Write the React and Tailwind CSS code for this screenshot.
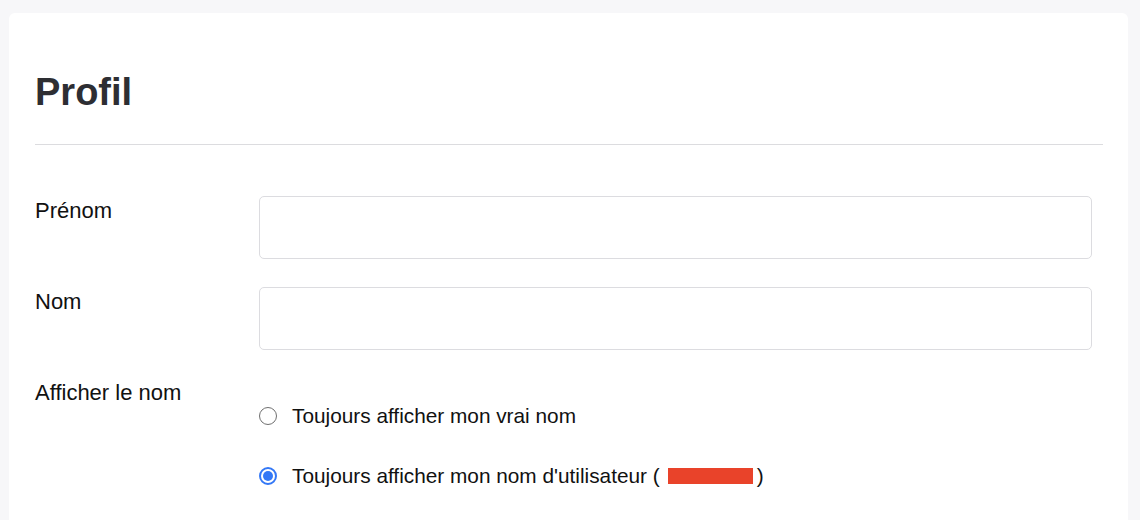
const Radio = ({ checked }) => (
  <span
    className={
      checked
        ? "w-[18px] h-[18px] rounded-full border-2 border-[#3478f6] bg-white flex items-center justify-center flex-shrink-0"
        : "w-[18px] h-[18px] rounded-full border-[1.5px] border-[#6f6f6f] bg-white flex-shrink-0"
    }
  >
    {checked && <span className="w-[10px] h-[10px] rounded-full bg-[#3478f6]" />}
  </span>
)

const Field = ({ label }) => (
  <div className="flex">
    <label className="w-[224px] flex-shrink-0 text-[22px] leading-[30px] text-[#111]">{label}</label>
    <div className="flex-1 mr-[11px]">
      <input
        type="text"
        className="w-full h-[63px] border border-[#dcdce0] rounded-[5px] bg-white outline-none"
      />
    </div>
  </div>
)

export default function App() {
  const options = [
    { text: "Toujours afficher mon vrai nom", checked: false },
    { text: "Toujours afficher mon nom d'utilisateur (", checked: true, redacted: true },
  ]

  return (
    <div
      className="min-h-[520px] bg-[#f7f7f9] pt-[13px] pl-[9px] pr-[12px]"
      style={{ fontFamily: '"Liberation Sans", Arial, sans-serif' }}
    >
      <div className="bg-white rounded-[6px] pt-[60px] pl-[26px] pr-[25px] pb-10 min-h-[520px]">
        <h1 className="text-[38px] leading-[38px] font-bold text-[#2d2e33]">Profil</h1>
        <div className="mt-[33px] border-t border-[#dcdcdf]" />

        <div className="mt-[51px] flex flex-col gap-[28px]">
          <Field label="Prénom" />
          <Field label="Nom" />

          <div className="flex">
            <span className="w-[224px] flex-shrink-0 text-[22px] leading-[30px] text-[#111]">Afficher le nom</span>
            <div className="flex flex-col pt-[8px]">
              {options.map((opt, i) => (
                <div key={i} className="h-[60px] flex items-center gap-[15px]">
                  <Radio checked={opt.checked} />
                  <span className="text-[20.8px] text-[#111] flex items-center">
                    {opt.text}
                    {opt.redacted && (
                      <>
                        <span className="inline-block w-[85px] h-[16px] bg-[#e9432a] ml-[8px] mr-[4px]" />
                        )
                      </>
                    )}
                  </span>
                </div>
              ))}
            </div>
          </div>
        </div>
      </div>
    </div>
  )
}
